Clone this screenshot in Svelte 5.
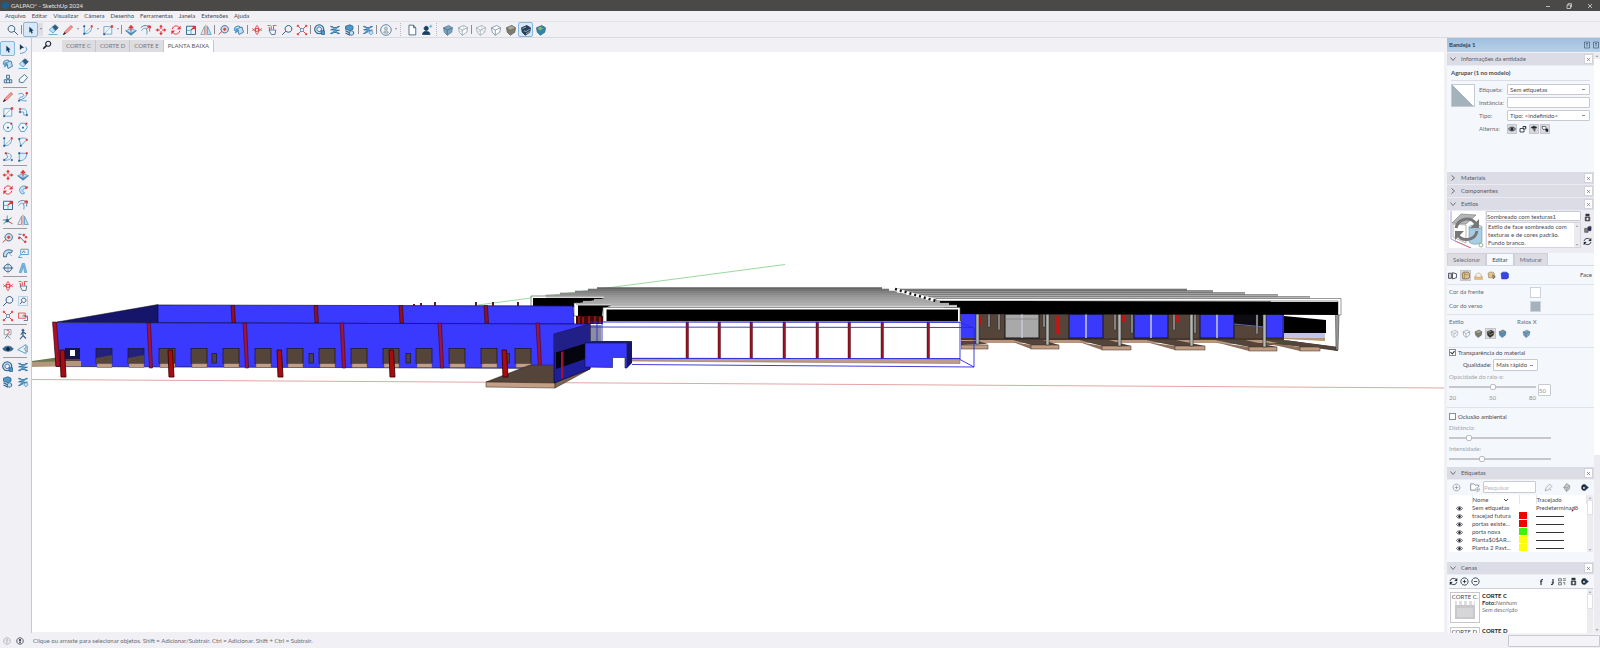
<script lang="ts">
  type Shape = [d: string, stroke: string, fill?: string, width?: number];

  const N = "#2f5d85";
  const B = "#4b98c9";
  const L = "#bfdff3";
  const R = "#de3434";
  const K = "#1c2430";
  const G = "#8a9099";
  const O = "none";

  const cube = "M2 5 L9 2 L14 5 L13 11 L7 15 L3 11 Z";
  const cubeEdges = "M2 5 L7 8 L14 5 M7 8 V15";

  const icons: Record<string, Shape[]> = {
    lens: [["M6 2 a4.500 4.500 0 1 1 -.1 0 Z M9.500 9.500 L14.500 14.500", N, O, 1.3]],
    search: [["M10 2 a4.5 4.5 0 1 1 -.1 0 Z M6.500 9.500 L1.500 14.500", N, O, 1.3]],
    find: [["M10 2 a4 4 0 1 1 -.1 0 Z", K, O, 1.8], ["M7 9 L2 14", K, O, 2.6]],
    select: [["M6 4 L11 8.500 L9 9 L10 12 L8.800 12.500 L7.500 9.800 L6 11 Z", "#143a5e", "#143a5e", 0.4]],
    lasso: [["M4 2 L9 6 L6.500 6.500 L4 9 Z", "#143a5e", "#143a5e", 0.4], ["M11 5 C15 8 13 13 4 14", B, O, 1.2]],
    eraser: [["M7 4 L11 1 L15 5 L11 9 Z", N, N], ["M7 4 L11 9 L8 12 L3 8 Z", B, L], ["M2 14 H14", B]],
    pencil: [["M2 14 L4 10 L12 2 L14 4 L6 12 Z", R, "#f3a9a4"], ["M2 14 L3.500 11.500 L4.500 12.500 Z", K, K]],
    freehand: [["M2 4 C8 1 12 7 6 8 S4 14 13 13 M3 12 C8 11 12 9 13 4", B, O, 1.2], ["M12 2 h2 v2 h-2 Z", R, R], ["M2 12 h1.500 v1.500 h-1.500 Z", N, N]],
    arc: [["M3 3 V13 C9 13 13 10 13 3", B, O, 1.1], ["M3 13 L13 3", G, O, 0.7], ["M2 2 h2 v2 h-2 Z M2 12 h2 v2 h-2 Z", N, N, 0.5], ["M12 2 h2 v2 h-2 Z", R, R, 0.5]],
    arc2: [["M3 4 C9 1 14 4 13 5 L5 13 Z", B, O, 1.1], ["M2 3 h2 v2 h-2 Z M4 12 h2 v2 h-2 Z", N, N, 0.5], ["M12 4 h2 v2 h-2 Z", R, R, 0.5]],
    arc3: [["M5 3 C16 2 14 14 3 12 M5 3 L8 8 L3 12", B, O, 1.1], ["M4 2 h2 v2 h-2 Z", R, R, 0.5], ["M2 11 h2 v2 h-2 Z M12 11 h2 v2 h-2 Z", N, N, 0.5]],
    pie: [["M3 3 V13 C9 13 13 10 13 3 Z", B, "#dceef9", 1.1], ["M2 2 h2 v2 h-2 Z M2 12 h2 v2 h-2 Z", N, N, 0.5], ["M12 2 h2 v2 h-2 Z", R, R, 0.5]],
    rect: [["M2.500 3.500 H13 V13.500 H2.500 Z", B, "#eef7fc"], ["M3 13 L13 3", G, O, 0.8], ["M12 2 h2.500 v2.500 h-2.500 Z", R, R, 0.5], ["M2 12.500 h2 v2 h-2 Z", N, N, 0.5]],
    rotrect: [["M4 4 H10 C13 5 13 8 13 12 H9 V8 H4 Z", B, "#eef7fc"], ["M3 3 h2 v2 h-2 Z", R, R, 0.5], ["M12 11 h2 v2 h-2 Z M3 7 h2 v2 h-2 Z", N, N, 0.5]],
    circle: [["M8 2 a6 6 0 1 1 -.1 0 Z", B, "#f2f9fd", 1.2], ["M7.200 8 h1.500 v1.500 h-1.500 Z", N, N], ["M11.500 2.500 h2 v2 h-2 Z", R, R, 0.5]],
    polygon: [["M5 3 H10 L14 8 L10 14 H5 L2 8 Z", B, "#f2f9fd", 1.2], ["M7.200 8 h1.500 v1.500 h-1.500 Z", N, N], ["M11.500 2.500 h2 v2 h-2 Z", R, R, 0.5]],
    pushpull: [["M1 9 L8 12 L15 9 L8 15 Z", N, B, 0.8], ["M1 9 L8 6 L15 9 L8 12 Z", B, L], ["M8 10 V5 M8 2 L5.500 5 H10.500 Z", R, R, 1.4]],
    offset: [["M2 9 C6 3 11 5 9 14", B, O, 1.2], ["M1 5 C6 0 13 1 13 10", N, O, 1], ["M8 7 L13 3 M10 2.500 H14 V6", R, R, 1.1]],
    move: [["M8 1 L10 4 H6 Z M8 15 L10 12 H6 Z M1 8 L4 6 V10 Z M15 8 L12 6 V10 Z", R, R, 0.4], ["M8 4 V6.500 M8 9.500 V12 M4 8 H6.500 M9.500 8 H12", R, O, 1.5]],
    rotate: [["M3 7 C4 2 10 1 12.500 5 M13 9 C12 14 6 15 3.500 11", R, O, 1.3], ["M14 2.500 V7 H9.500 Z M2 13.500 V9 H6.500 Z", R, R, 0.3]],
    follow: [["M12 3 C5 1 1 7 5 12 C8 15 12 12 9 11 C6 9 8 6 12 6", B, L, 1.1], ["M11 3 L15 4 L12 7 Z", R, R, 0.5]],
    scale: [["M2 3 H14 V14 H2 Z", N, "#e6f3fa", 1.2], ["M2.500 8.500 H8 V14", B], ["M8 8 L13 4 M10 3.500 H13.500 V7", R, R, 1.8]],
    axes: [["M7 9 V2", B, O, 1.3], ["M7 9 L14 13", R, O, 1.3], ["M7 9 L2 13 M7 9 L13 5", "#2b9c59", O, 1.3], ["M5.500 7.500 h3 v3 h-3 Z", N, N], ["M1 8 H6", N]],
    mirror: [["M6 3 V14 H1 Z", G, "#e4e8ee"], ["M10 3 V14 H15 Z", B, L], ["M8 1 V15", R, O, 0.9]],
    tape: [["M9 2 a5 5 0 1 1 -.1 0 Z", N, "#cfdbe6", 1.1], ["M9 5.500 a1.500 1.500 0 1 1 -.1 0 Z", R, R], ["M5 10 L1 14", R, O, 1.3]],
    paint: [["M6 6 L12 4 L14 11 L8 14 Z", N, L], ["M2 9 C1 3 8 1 10 5", B, O, 1.6], ["M4 6 L8 9 L3 12 Z", B, B]],
    stamp: [["M6 3 H10 V7 H6 Z M3 9 H13 V13 H3 Z M8 7 V9", N, "#dfe9f1", 1.1], ["M6 9 V13 M10 9 V13", N]],
    tag: [["M3 12 L3 8 L10 2 L14 6 L8 13 Z", N, "#f2f7fb", 1.1]],
    dims: [["M3 6 L10 13 M2 3 L6 3", N, O, 1.1], ["M2 7 h2 v2 h-2 Z M8 3 h2 v2 h-2 Z M11 6 h2 v2 h-2 Z M10 12 h2 v2 h-2 Z", R, R]],
    protractor: [["M2 13 C1 4 8 2 14 5 L12 8 C8 6 6 9 6 13 Z", N, L, 1.2], ["M9 8 L13 12", B]],
    label: [["M5 3 H15 V10 H5 Z M5 10 L2 14 H7", B, "#eef7fc", 1.2], ["M7 8 L9 5 L11 8", N]],
    section: [["M8 3 a5 5 0 1 1 -.1 0 Z M1 8 H15", N, "#dce9f2", 1.2], ["M8 1 V15", G]],
    text3d: [["M3 14 L7 2 H10 L13 14 H10 L8.500 5 L6 14 Z", B, "#7fbbe0", 0.9]],
    orbit: [["M8 2 C5 5 5 11 8 14 M8 2 C11 5 11 11 8 14", R, O, 1.2], ["M2 6 C6 11 10 11 14 6 M2 9 C5 5 11 5 14 9", R, O, 1.2]],
    pan: [["M5 8 L4 4 M7 7 V3 M10 7 V3", R, O, 1.2], ["M4 8 H13 L12 14 H7 Z", N, "#f4f4f6"], ["M2 2 H6 M9 2 H14", R]],
    zoomwin: [["M2 2 H14 V14 H2 Z", "#9cc8e2"], ["M9 4 a3 3 0 1 1 -.1 0 Z M7 9 L4 12", N, O, 1.2]],
    zoomext: [["M6 6 L2 2 M10 6 L14 2 M6 10 L2 14 M10 10 L14 14", R, O, 1.2], ["M1.500 1.500 h2.500 l-2.500 2.500 Z M14.500 1.500 h-2.500 l2.500 2.500 Z M1.500 14.500 h2.500 l-2.500 -2.500 Z M14.500 14.500 h-2.500 l2.500 -2.500 Z", R, R, 0.5], ["M6 6 H10 V10 H6 Z", N, "#eef", 0.8]],
    previous: [["M2 4 H11 V11 H2 Z", R, "#fbeaea", 1], ["M7 8 H14 V14 H9", N], ["M9 6 L13 10", R, O, 1.3]],
    position: [["M3 2 H12 V9 H3 Z", G, "#f1f1f4"], ["M6 4 a2 2 0 1 1 2 3 L7 9", R, O, 1.1], ["M4 14 L7 10 L11 14", N]],
    walk: [["M8 1.500 a1.500 1.500 0 1 1 -.1 0 Z", N, N, 0.8], ["M8 5 V10 L4 15 M8 10 L12 14 M5 9 L8 5 L12 8", N, O, 1.5]],
    look: [["M1 8 C4 3 12 3 15 8 C12 12 4 12 1 8 Z", N, "#2a6c94"], ["M8 6 a2 2 0 1 1 -.1 0 Z", K, K]],
    cutplane: [["M1 9 L12 2 V14 Z", B, "#eef7fc", 1.2], ["M9 8 L14 4 V12 Z", G, O]],
    warehouse: [["M7 1 a6 6 0 1 1 -.1 0 Z", N, L, 1.4], ["M7 4 a3 3 0 1 1 -.1 0 Z", N, "#eef", 1.1], ["M9 9 H14 V14 H10 Z", N, B]],
    extension: [["M2 3 C6 6 10 6 14 3 M2 8 C6 6 10 10 14 8 M2 13 C6 10 10 10 14 13", N, O, 1.7], ["M4 3 L12 13 M12 3 L4 13", B, O, 1.7]],
    layout: [["M2 3 L8 1 L12 3 V7 L8 9 L2 7 Z", N, B], ["M2 9 L8 12 L12 10 M2 12 L8 15", N, O, 1.5], ["M10 9 a3 3 0 1 1 -.1 0", N, L, 1.2]],
    extcfg: [["M2 3 C6 6 10 6 14 3 M2 8 C6 6 10 10 14 8 M2 13 L8 10", N, O, 1.7], ["M4 3 L12 13 M12 3 L4 12", B, O, 1.7], ["M12 9 a2.500 2.500 0 1 1 -.1 0 Z", B, L]],
    user: [["M8 1 a7 7 0 1 1 -.1 0 Z", N, "#f0f3f6", 1], ["M8 4 a2 2 0 1 1 -.1 0 Z M5 12 C5 8 11 8 11 12 Z", G, "#c9d2da", 1]],
    page: [["M4 1.500 H10 L13 5 V14.500 H4 Z M10 1.500 V5 H13", N, "#fff", 1.1]],
    person: [["M7 3 a2.800 2.800 0 1 1 -.1 0 Z M2 14 C2 8 12 8 12 14 Z", "#173f66", "#173f66"], ["M13 1 V5 M11 3 H15", B]],
    xray: [[cube, "#557d99", "#7fa3bd"], [cubeEdges, "#3f6582"]],
    backedge: [[cube, "#8298a8", "#fff"], [cubeEdges, "#8298a8"], ["M3 11 L9 8 V2", "#b5c2cc", O, 0.8]],
    wire: [[cube, "#8d9aa5", "#fafbfc", 0.9], [cubeEdges, "#8d9aa5", O, 0.9], ["M3 11 L9 8 L13 11 M9 8 V2", "#a9b3bb", O, 0.7]],
    hidden: [[cube, "#68839a", "#fff"], [cubeEdges, "#68839a"]],
    shaded: [[cube, "#5d6258", "#7c7d70"], ["M2 5 L9 2 L14 5 L7 8 Z", "#5d6258", "#aaa99a", 0.6]],
    textured: [[cube, "#1d2c3a", "#24435e"], ["M3 6 L8 4 M5 9 L8 10 L13 7 M8 13 L13 10", "#bfd5e4", O, 0.9]],
    texdark: [[cube, "#2b2a26", "#35332d"], ["M3 6 L9 4 M5 8 L8 10 L13 7", "#b9b29c", O, 1.2]],
    mono: [[cube, "#2c6687", "#2f86ad"], ["M7 4 L10 6 L7 8 L4 6 Z", "#8fb56f", "#8fb56f"]],
    monoblue: [[cube, "#3e6d92", "#4d8fc0"], ["M2 5 L9 2 L14 5 L7 8 Z", "#3e6d92", "#8b8f88", 0.6]],
    eye: [["M1 8 C4 3 12 3 15 8 C12 13 4 13 1 8 Z", K, O, 1.6], ["M8 5.500 a2.500 2.500 0 1 1 -.1 0 Z", K, K, 1.4]],
    unlock: [["M2 7 H10 V14 H2 Z M8 7 V3 H13 V7", K, O, 1.6], ["M8 3 H14 V8 H8", K, O, 1.2]],
    shadowcast: [["M2 5 L8 2 L14 5 L8 8 Z", K, K], ["M6 8 L12 7 L9 14 Z", G, "#555"]],
    shadowrecv: [["M2 3 H9 L11 8 L4 9 Z", K, "#fff", 1.2], ["M9 8 H14 V13 H10 Z", K, K]],
    stylenew: [["M4 7 H12 V14 H4 Z", K, "#555"], ["M5 2 H11 V5 H5 Z", K, K], ["M7 9 H9 V12 H7 Z", "#fff", "#fff"]],
    styleadd: [["M3 6 H9 V13 H3 Z M8 4 L14 2 V8 H9", "#333", "#858585"], ["M9 4 H14 V10 H10 Z", "#223", "#2b2f78"]],
    refresh: [["M2 7 C3 2 10 1 13 5 M14 9 C13 14 6 15 3 11", K, O, 1.6], ["M14.500 2 V7 H10 Z M1.500 14 V9 H6 Z", K, K, 0.4]],
    edgeset: [["M1 4 H6 V13 H1 Z", K, "#ddd", 1.3], ["M8 3 L15 5 V12 L8 14 Z", K, "#fff", 1.3]],
    faceset: [["M2 4 L5 2 H13 L15 5 V12 L12 14 H3 Z", "#6f5a35", "#dcbf8a", 1.2], ["M5 2 L6 6 V14 M6 6 H12", "#8d7344"]],
    bgset: [["M1 10 H15 V15 H1 Z", "#d9a15c", "#f0bf7e"], ["M3 9 C3 2 13 2 13 9 V11 H3 Z", "#98927f", "#f7f4ea"]],
    markset: [["M2 4 L5 2 H11 L13 5 V12 H3 Z", "#8d7344", "#e2c48c"], ["M10 7 L15 10 L11 14 Z", "#555", "#999"]],
    modelset: [["M2 4 L5 2 H12 L15 5 V12 L12 14 H3 Z", "#2431b0", "#3644e8"]],
    add: [["M8 1.500 a6.500 6.500 0 1 1 -.1 0 Z M8 5 V11 M5 8 H11", K, O, 1.4]],
    addgrey: [["M8 2 a6 6 0 1 1 -.1 0 Z M8 5 V11 M5 8 H11", G, O, 1.3]],
    remove: [["M8 1.500 a6.500 6.500 0 1 1 -.1 0 Z M5 8 H11", K, O, 1.4]],
    folder: [["M1 13 V3 H6 L8 5 H14 V8 M1 13 H8", "#7b8088", "#fff", 1.3], ["M12 9 a3 3 0 1 1 -.1 0 Z M12 10.500 V13.500 M10.500 12 H13.500", "#7b8088", "#fff"]],
    pen: [["M2 14 L4 8 L10 2 L14 6 L8 12 Z M10 12 H13", "#8e9298", "#f4f4f4", 1.2]],
    filter: [["M3 8 L8 1 L14 5 L13 11 L8 15 Z", "#777", "#c9c9c9"], ["M3 8 L9 8 L14 5 M9 8 L8 15", "#8c8c8c"]],
    export: [["M5 3 H9 V13 H5 L3 10 V6 Z", K, K], ["M9 3 L15 8 L9 13 Z", "#173a5c", "#173a5c"], ["M6 7 H8 V10 H6 Z", "#fff", "#fff", 0.5]],
    up: [["M6 14 V5 C6 3 8 3 10 3", K, O, 2.2], ["M4 7 H9", K]],
    down: [["M10 2 V11 C10 13 8 13 6 13", K, O, 2.2], ["M7 9 H12", K]],
    grid: [["M1 3 H6 V7 H1 Z M9 3 H14 M9 6 H14 M1 10 H6 V14 H1 Z M9 10 H12 V14", "#444", O, 1.2]],
    info: [["M8 1.500 a6.500 6.500 0 1 1 -.1 0 Z M8 5 V12 M6 7 L8 5 L10 7", G, O, 1.2]],
    geo: [["M8 1.500 a6.500 6.500 0 1 1 -.1 0 Z", K, O, 1.4], ["M8 4.500 a1.500 1.500 0 1 1 -.1 0 Z M7.500 9 H8.500 V12 H7.500 Z", K, K]],
    cross: [["M3 3 L13 13 M13 3 L3 13", "#66666c", O, 2]],
    pin: [["M3 2 H13 V14 H3 Z M6 5 H10 M8 5 V11", "#4f6780", O, 1.6]],
  };

  const menus = ["Arquivo", "Editar", "Visualizar", "Câmera", "Desenho", "Ferramentas", "Janela", "Extensões", "Ajuda"];

  // "|" is a divider, "v" a dropdown caret, ":" the gap between two toolbars
  const toolbar = [
    "lens", "|", "select", "v", " ", "eraser", "pencil", "v", "arc", "v", "rect", "v", "|",
    "pushpull", "offset", "move", "rotate", "scale", "mirror", "|", "tape", "paint", "|",
    "orbit", "pan", "search", "zoomext", "|", "warehouse", "extension", "layout", "|", "extcfg", "|",
    "user", "v", ":", "page", "person", ":", "xray", "backedge", "|", "wire", "hidden", "shaded", "textured", "mono",
  ];

  const palette = [
    ["select", "lasso", "paint", "eraser", "stamp", "tag"],
    ["pencil", "freehand", "rect", "rotrect", "circle", "polygon", "arc", "arc2", "arc3", "pie"],
    ["move", "pushpull", "rotate", "follow", "scale", "offset", "axes", "mirror"],
    ["tape", "dims", "protractor", "label", "section", "text3d"],
    ["orbit", "pan", "search", "zoomwin", "zoomext", "previous"],
    ["position", "walk", "look", "cutplane"],
    ["warehouse", "extension", "layout", "extcfg"],
  ];

  const sceneTabs = ["CORTE C", "CORTE D", "CORTE E", "PLANTA BAIXA"];
  let activeScene = $state("PLANTA BAIXA");

  const tags = [
    { name: "tracejad futura", color: "#f40000" },
    { name: "portas existe...", color: "#f40000" },
    { name: "porta nova", color: "#3cf500" },
    { name: "Planta$0$AR...", color: "#ffff00" },
    { name: "Planta 2 Pavt...", color: "#ffff00" },
  ];

  const scenes = [
    { name: "CORTE C", expanded: true },
    { name: "CORTE D", expanded: false },
  ];

  let transparency = $state(true);
  let occlusion = $state(false);

  // left building
  const backColumns = [231, 314, 399, 484];
  const wallColumns = [147, 243, 340, 438, 536];
  const frontColumns = [60, 168, 277, 389, 502];
  const docks = [96, 128, 159, 191, 223, 255, 287, 319, 351, 383, 416, 449, 481, 515];
  const hatches = [212, 309, 406, 505];
  const studs = [[413, 304], [420, 303], [434, 302], [475, 302], [492, 302], [517, 302]];

  // central roof: one strip per roof bay, seen edge on
  const strips = [
    [597, 882, 287.5, "#6a6a6a"], [588, 889, 289, "#7c7c7c"], [575, 897, 291, "#8e8e8e"],
    [560, 906, 293, "#9d9d9d"], [546, 915, 295, "#ababab"], [604, 924, 297, "#b4b4b4"],
    [594, 932, 299, "#bcbcbc"], [583, 940, 301, "#c4c4c4"], [576, 949, 303, "#cccccc"],
    [611, 957, 305, "#d6d6d6"],
  ] as [number, number, number, string][];
  const hallColumns = [686, 718, 750, 783, 816, 848, 881, 927];

  // right building
  const rightStrips = [
    [893, 1187, 289, "#808080"], [900, 1213, 290.5, "#929292"], [908, 1245, 292.5, "#a0a0a0"],
    [918, 1278, 294.5, "#ababab"], [928, 1310, 296.5, "#b8b8b8"],
  ] as [number, number, number, string][];
  const doors = [[1005, "#a9a9a9"], [1069, "#3a3aff"], [1134, "#3a3aff"], [1200, "#3a3aff"]] as [number, string][];
  const posts = [[976, 344], [1046, 345], [1118, 346], [1190, 346], [1263, 347]];
  const rearPosts = [[988, 327], [998, 330], [1043, 327], [1114, 330], [1131, 333], [1173, 330], [1194, 333], [1256, 334]];
  const ramps = [[1013, 1031, 1059, 345], [1079, 1102, 1131, 346], [1146, 1175, 1205, 346], [1215, 1249, 1277, 347], [1262, 1300, 1320, 347]];
</script>

{#snippet icon(name: string, size = 12)}
  <svg class="icon" width={size} height={size} viewBox="0 0 16 16" aria-hidden="true">
    {#each icons[name] as [d, stroke, fill, width]}
      <path {d} {stroke} fill={fill ?? "none"} stroke-width={width ?? 1} />
    {/each}
  </svg>
{/snippet}

{#snippet header(title: string, open: boolean)}
  <header class="section-head">
    <svg width="6" height="6" viewBox="0 0 6 6" aria-hidden="true">
      <path d={open ? "M0.500 1.500 L3 4.500 L5.500 1.500" : "M1.500 0.500 L4.500 3 L1.500 5.500"} fill="none" stroke="#555" stroke-width=".8" />
    </svg>
    <h2>{title}</h2>
    <button class="close" aria-label="Fechar {title}">{@render icon("cross", 5)}</button>
  </header>
{/snippet}

<div class="app">
  <div class="titlebar">
    <svg width="7" height="7" viewBox="0 0 8 8" aria-hidden="true"><path d="M0 2 L4 0 L8 2 V6 L4 8 L0 6 Z" fill="#1b5f8c" /></svg>
    <span>GALPAO* - SketchUp 2024</span>
    <div class="window-buttons">
      <button aria-label="Minimizar"><svg width="6" height="6" viewBox="0 0 6 6"><path d="M1 3.500 H5" /></svg></button>
      <button aria-label="Restaurar"><svg width="6" height="6" viewBox="0 0 6 6"><path d="M1 2 H4.500 V5.500 H1 Z M2 2 V.7 H5.500 V4 H4.500" /></svg></button>
      <button aria-label="Fechar"><svg width="6" height="6" viewBox="0 0 6 6"><path d="M1 1 L5 5 M5 1 L1 5" /></svg></button>
    </div>
  </div>

  <nav class="menubar">
    {#each menus as menu}
      <button>{menu}</button>
    {/each}
  </nav>

  <div class="toolbar">
    {#each toolbar as item, i}
      {#if item === "|"}
        <span class="divider"></span>
      {:else if item === "v"}
        <button class="caret" class:attached={i === 3} aria-label="Mais opções"></button>
      {:else if item === " "}
        <span class="space"></span>
      {:else if item === ":"}
        <span class="grip"></span>
      {:else}
        <button class="tool" class:active={item === "select" || item === "textured"} aria-label={item}>
          {@render icon(item)}
        </button>
      {/if}
    {/each}
  </div>

  <div class="workspace">
    <div class="palette">
      {#each palette as group, g}
        <div class="group">
          {#each group as item}
            <button class="tool" class:active={g === 0 && item === "select"} aria-label={item}>{@render icon(item)}</button>
          {/each}
        </div>
      {/each}
    </div>

    <main>
      <div class="scene-tabs">
        <button class="find" aria-label="Pesquisar cenas">{@render icon("find", 10)}</button>
        {#each sceneTabs as tab}
          <button class="scene-tab" class:current={tab === activeScene} onclick={() => (activeScene = tab)}>{tab}</button>
        {/each}
      </div>

      <svg class="viewport" viewBox="32 52 1412 580" role="img" aria-label="Modelo do galpão">
        <line x1="32" y1="379.500" x2="1444" y2="388" stroke="#dc8e8e" stroke-width=".8" />
        <line x1="478" y1="305" x2="785" y2="264.500" stroke="#7fce86" stroke-width=".8" />

        <!-- right building -->
        <polygon points="960,314 1285,314 1285,340 1338,347 1338,351 1300,346 1215,343 960,343" fill="#54443a" />
        <polygon points="960,340 1285,340 1285,343 960,343" fill="#b8957c" />
        <polygon points="960,338 1285,338 1285,340 960,340" fill="#46372e" />
        {#each ramps as [x0, x1, x2, y]}
          <polygon points="{x0},340 {x0 + 30},340 {x2},{y} {x1},{y}" fill="#54443a" />
          <polygon points="{x1},{y} {x2},{y} {x2},{y + 4} {x1},{y + 4} {x0},342" fill="#8e705e" />
          <rect x={x1} {y} width={x2 - x1} height="4" fill="#bf9b82" stroke="#3a2d25" stroke-width=".5" />
        {/each}
        <polygon points="961,341 978,341 988,344 961,345" fill="#54443a" />
        <rect x="961" y="345" width="27" height="4" fill="#bf9b82" stroke="#3a2d25" stroke-width=".5" />
        <rect x="961" y="314" width="14" height="24" fill="#3a3aff" />
        {#each doors as [x, fill]}
          <rect {x} y="314" width="34" height="24" {fill} stroke="#15151c" />
          <line x1={x + 17} y1="314" x2={x + 17} y2="338" stroke="#c9c9d6" stroke-width="1.500" />
        {/each}
        <line x1="1005" y1="319" x2="1039" y2="319" stroke="#777" stroke-width=".6" />
        <polygon points="1234,314 1264,314 1264,327 1234,325" fill="#0d0c12" />
        <path d="M1234 324 L1264 327" stroke="#6c6ca8" />
        <rect x="1266" y="314" width="17" height="24" fill="#3a3aff" stroke="#15151c" stroke-width=".6" />
        <polygon points="1284,314 1338,314 1338,347 1326,345 1284,340" fill="#fff" />
        <polygon points="1284,316 1326,320 1326,333 1284,333" fill="#000" />
        <rect x="1284" y="333" width="41" height="5" fill="#c3c3ea" />
        <polygon points="1284,338 1325,338 1325,341 1284,339" fill="#b8957c" />
        <polygon points="1284,340 1338,347 1338,351 1300,344" fill="#54443a" />
        {#each rearPosts as [x, y]}
          <rect {x} y="314" width="2" height={y - 314} fill="#9b9b9b" stroke="#222" stroke-width=".4" />
        {/each}
        <path d="M980 316 V325 M1058 316 V334 M1124 315 V322 M1177 315 V322" stroke="#c41414" stroke-width="3.500" />
        {#each posts as [x, y]}
          <rect {x} y="314" width="3" height={y - 314} fill="#b4b8b4" stroke="#222" stroke-width=".5" />
        {/each}
        <path d="M1335.500 314 H1339 L1338 350 H1336 Z" fill="#9a9a9a" stroke="#222" stroke-width=".5" />
        {#each rightStrips as [x0, x1, y, fill]}
          <rect x={x0} {y} width={x1 - x0} height="3" {fill} />
          <line {x1} y1={y} x2={x0} y2={y} stroke="#555" stroke-width=".5" />
        {/each}
        <polygon points="936,298.500 1341,298.500 1341,315 1338,315 1338,301 936,301" fill="#fff" stroke="#555" stroke-width=".6" />
        <polygon points="938,301 1338,301.500 1338,315 950,314" fill="#000" />

        <!-- central roof -->
        <polygon points="531,296 611,296 611,304 574,304 574,307 531,307" fill="#fff" stroke="#444" stroke-width=".6" />
        <polygon points="533,298 606,298 596,300 574,304 574,307 533,307" fill="#000" />
        <polygon points="574,303 612,303 604,316 574,316" fill="#fff" stroke="#444" stroke-width=".6" />
        <polygon points="578,305 612,305 603,309 602,316 578,316" fill="#000" />
        {#each strips as [x0, x1, y, fill]}
          <rect x={x0} {y} width={x1 - x0} height="2.500" {fill} />
          <line x1={x0} y1={y} x2={x1} y2={y} stroke="#5a5a5a" stroke-width=".5" />
        {/each}
        <path d="M893 289 L934 300" stroke="#fff" stroke-width="3" />
        <path d="M895 289 L936 301" stroke="#111" stroke-width="2.500" stroke-dasharray="2 3" />
        <rect x="603" y="307.500" width="357" height="14" fill="#fff" stroke="#555" stroke-width=".6" />
        <polygon points="606.500,309.500 958,309.500 958,322 606.500,321" fill="#000" />
        <rect x="603" y="321.500" width="358" height="37" fill="#fff" />
        <polygon points="630,358 960,359 960,363.500 630,361" fill="#bf9b8c" stroke="#7a5c4c" stroke-width=".5" />
        {#each hallColumns as x}
          <rect {x} y="322" width="2.500" height="36.500" fill="#9c1020" stroke="#330808" stroke-width=".4" />
        {/each}
        <rect x="576" y="316" width="27" height="8" fill="#3a0c0c" />
        <path d="M579 316 V324 M583 317 V324 M589 316 V324 M595 316 V324 M600 317 V324" stroke="#b01818" stroke-width="1.500" />
        <rect x="589" y="325" width="12" height="17" fill="#8c8ca4" />
        <path d="M590 322 L960 322.500 L974 328 V367 L960 359.500 V322.500 M588 327 L974 327.500 M632 358.500 H960 M632 364.500 L974 367 M597 322 V342 M602 322 V341" fill="none" stroke="#2a2ad4" stroke-width=".9" />

        <!-- left building -->
        <polygon points="32,361 60,357 84,360 84,363 32,363" fill="#6b7a4c" />
        <polygon points="32,362 84,361 84,366 32,367" fill="#b3967c" />
        <polygon points="57,322 158,304.500 158,323" fill="#15156c" stroke="#111" stroke-width=".5" />
        <polygon points="158,305 573,306 574,324 158,323" fill="#3a3aff" stroke="#10103c" stroke-width=".7" />
        {#each studs as [x, y]}
          <rect {x} {y} width="2" height={306 - y} fill="#5a1a24" />
        {/each}
        {#each backColumns as x}
          <polygon points="{x},305.500 {x + 3.5},305.500 {x + 4.5},323 {x + 1},323" fill="#8e1024" stroke="#2b0810" stroke-width=".6" />
        {/each}
        <polygon points="54,322.500 590,324 590,368.500 56,366.500" fill="#3a3aff" stroke="#10103c" stroke-width=".7" />
        {#each docks as x, i}
          <rect {x} y="348.500" width="16" height="15" fill={i < 2 ? "#22227e" : "#54443a"} stroke="#1b1620" stroke-width=".7" />
          {#if i < 2}
            <polygon points="{x},358 {x + 16},355 {x + 16},363.500 {x},363.500" fill="#54443a" />
          {/if}
          <rect x={x + 1} y="363.500" width="15" height="4" fill="#c39f85" stroke="#54443a" stroke-width=".4" />
        {/each}
        <rect x="65" y="348" width="15" height="13" fill="#15154c" />
        <rect x="70" y="350" width="5" height="6" fill="#fff" />
        <rect x="65" y="361" width="16" height="5.500" fill="#b3967c" />
        <rect x="65" y="359" width="15" height="2" fill="#54443a" />
        {#each hatches as x}
          <rect {x} y="353.500" width="4.500" height="9.500" fill="#4c4048" stroke="#1b1620" stroke-width=".7" />
        {/each}
        <polygon points="52.500,322 56.500,322 60,366.500 56,366.500" fill="#a81024" stroke="#3c0810" stroke-width=".6" />
        {#each wallColumns as x}
          <polygon points="{x},323 {x + 3.5},323 {x + 5.5},368 {x + 2.500},368" fill="#a01440" stroke="#3c0820" stroke-width=".6" />
        {/each}
        <polygon points="486,382 530,365 590,365 555,384" fill="#54443a" stroke="#2c211b" stroke-width=".5" />
        <polygon points="486,382 555,383 555,388 486,387" fill="#c39f85" stroke="#2c211b" stroke-width=".5" />
        <polygon points="555,383 590,366 590,369 555,388" fill="#7d6352" stroke="#2c211b" stroke-width=".5" />
        {#each frontColumns as x}
          <polygon points="{x},350 {x + 4.5},350 {x + 6},377 {x + 1},377" fill="#a80c10" stroke="#3c0404" stroke-width=".9" />
        {/each}
        <polygon points="554,334 590,324 590,369 554,383" fill="#1e1e96" stroke="#0a0a30" stroke-width=".7" />
        <polygon points="556,352 585,343 585,359 556,369" fill="#050510" />
        <polygon points="554,334 590,324 590,342 554,353" fill="#202088" />
        <polygon points="561,352 563.500,351 563.500,378 561,379" fill="#a01030" />
        <polygon points="585,343 592,341 632,341 627,344" fill="#1c1c88" />
        <path d="M585 343 H627 V368 H625 V357.500 H612.500 V367.500 L585 367 Z" fill="#3a3aff" stroke="#10103c" stroke-width=".6" />
        <polygon points="627,343 632,341 632,363 627,368" fill="#15156c" />
      </svg>
    </main>

    <aside class="tray">
      <div class="tray-title">
        <strong>Bandeja 1</strong>
        <button aria-label="Fixar bandeja">{@render icon("pin", 8)}</button>
        <button aria-label="Fechar bandeja">{@render icon("pin", 8)}</button>
      </div>
      <div class="tray-body">
        <div class="sections">
          {@render header("Informações da entidade", true)}
          <section class="entity">
            <h3>Agrupar (1 no modelo)</h3>
            <div class="entity-body">
              <div class="swatch-large"></div>
              <div class="fields">
                <label for="tag">Etiqueta:</label>
                <select id="tag"><option>Sem etiquetas</option></select>
                <label for="instance">Instância:</label>
                <input id="instance" type="text" />
                <label for="kind">Tipo:</label>
                <select id="kind"><option>Tipo: &lt;indefinido&gt;</option></select>
                <span>Alterna:</span>
                <div class="toggles">
                  <button class="on" aria-label="Visível">{@render icon("eye", 8)}</button>
                  <button aria-label="Bloquear">{@render icon("unlock", 8)}</button>
                  <button class="on" aria-label="Projetar sombras">{@render icon("shadowcast", 8)}</button>
                  <button class="on" aria-label="Receber sombras">{@render icon("shadowrecv", 8)}</button>
                </div>
              </div>
            </div>
          </section>

          {@render header("Materiais", false)}
          {@render header("Componentes", false)}
          {@render header("Estilos", true)}
          <section class="styles">
            <div class="style-top">
              <svg class="style-thumb" width="36" height="37" viewBox="0 0 36 37" aria-hidden="true">
                <path d="M2 0 V28 M2 28 L22 37" stroke="#8a8ad8" stroke-width=".8" />
                <path d="M6 30 L22 37" stroke="#d86a6a" stroke-width=".8" />
                <path d="M3 12 L12 3 L27 4 L17 13 Z" fill="#b4b7ba" stroke="#777" stroke-width=".6" />
                <path d="M4 13 L17 14 V32 L4 26 Z" fill="#fff" stroke="#888" stroke-width=".6" />
                <path d="M20 16 H33 V31 C29 34 23 34 20 31 Z" fill="#a9cde2" stroke="#6b90a8" stroke-width=".6" />
                <ellipse cx="26.500" cy="16" rx="6.500" ry="2" fill="#c9e2f0" stroke="#6b90a8" stroke-width=".6" />
                <path d="M7 17 C9 7 22 5 27 13 M28 20 C26 30 13 31 9 24" fill="none" stroke="#777" stroke-width="3" />
                <path d="M30 8 V17 H21 Z M6 29 V20 H15 Z" fill="#777" />
                <circle cx="32" cy="34" r="2" fill="none" stroke="#8db58d" />
              </svg>
              <div class="style-text">
                <input type="text" aria-label="Nome do estilo" value="Sombreado com texturas1" />
                <div class="description">
                  <p>Estilo de face sombreado com texturas e de cores padrão. Fundo branco.</p>
                  <div class="scroll"><i>▴</i><i>▾</i></div>
                </div>
              </div>
              <div class="style-actions">
                <button aria-label="Criar estilo">{@render icon("stylenew", 9)}</button>
                <button aria-label="Painel secundário">{@render icon("styleadd", 9)}</button>
                <button aria-label="Atualizar estilo">{@render icon("refresh", 9)}</button>
              </div>
            </div>
            <div class="style-tabs">
              <button>Selecionar</button>
              <button class="current">Editar</button>
              <button>Misturar</button>
            </div>
            <div class="style-sets">
              {#each ["edgeset", "faceset", "bgset", "markset", "modelset"] as set}
                <button class:on={set === "faceset"} aria-label={set}>{@render icon(set, 9)}</button>
              {/each}
              <span>Face</span>
            </div>
            <div class="colors">
              <div><span>Cor da frente</span><button class="swatch" style:background="#fff" aria-label="Cor da frente"></button></div>
              <div><span>Cor do verso</span><button class="swatch" style:background="#a4b2bb" aria-label="Cor do verso"></button></div>
            </div>
            <div class="face-styles">
              <div>
                <span>Estilo</span>
                <div class="row">
                  {#each ["wire", "hidden", "shaded", "texdark", "monoblue"] as face}
                    <button class:on={face === "texdark"} aria-label={face}>{@render icon(face, 9)}</button>
                  {/each}
                </div>
              </div>
              <div class="rays">
                <span>Raios X</span>
                <div class="row"><button aria-label="Raios X">{@render icon("xray", 9)}</button></div>
              </div>
            </div>
            <div class="transparency">
              <label class="check"><input type="checkbox" bind:checked={transparency} />Transparência do material</label>
              <div class="quality">
                <label for="quality">Qualidade:</label>
                <select id="quality"><option>Mais rápido</option></select>
              </div>
              <label class="muted" for="xray-opacity">Opacidade do raio-x:</label>
              <div class="opacity">
                <div class="scale">
                  <input id="xray-opacity" type="range" min="20" max="80" value="50" />
                  <div class="ticks"><span>20</span><span>50</span><span>80</span></div>
                </div>
                <input class="amount" type="text" value="50" aria-label="Valor da opacidade" />
              </div>
            </div>
            <div class="occlusion">
              <label class="check"><input type="checkbox" bind:checked={occlusion} />Oclusão ambiental</label>
              <label class="muted" for="distance">Distância:</label>
              <input id="distance" type="range" value="18" />
              <label class="muted" for="intensity">Intensidade:</label>
              <input id="intensity" type="range" value="31" />
            </div>
          </section>

          {@render header("Etiquetas", true)}
          <section class="tags">
            <div class="tag-tools">
              <button aria-label="Adicionar etiqueta">{@render icon("addgrey", 9)}</button>
              <button aria-label="Adicionar pasta">{@render icon("folder", 10)}</button>
              <input type="text" placeholder="Pesquisar" aria-label="Pesquisar etiquetas" />
              <button aria-label="Marcar">{@render icon("pen", 9)}</button>
              <button aria-label="Filtrar">{@render icon("filter", 9)}</button>
              <button aria-label="Detalhes">{@render icon("export", 9)}</button>
            </div>
            <div class="tag-list">
              <table>
                <thead>
                  <tr><th class="eye"></th><th class="name">Nome <svg width="4" height="4" viewBox="0 0 4 4"><path d="M0 1 L2 3 L4 1" fill="none" stroke="#444" /></svg></th><th class="color"></th><th>Tracejado</th></tr>
                </thead>
                <tbody>
                  <tr><td class="eye">{@render icon("eye", 7)}</td><td>Sem etiquetas</td><td></td><td class="default">Predeterminado<span class="edit">{@render icon("pencil", 7)}</span></td></tr>
                  {#each tags as tag}
                    <tr>
                      <td class="eye">{@render icon("eye", 7)}</td>
                      <td>{tag.name}</td>
                      <td><span class="tag-color" style:background={tag.color}></span></td>
                      <td><span class="dash"></span></td>
                    </tr>
                  {/each}
                </tbody>
              </table>
              <div class="scroll"><i>▴</i><b></b><i>▾</i></div>
            </div>
          </section>

          {@render header("Cenas", true)}
          <section class="scenes">
            <div class="scene-tools">
              <button aria-label="Atualizar cenas">{@render icon("refresh", 9)}</button>
              <button aria-label="Adicionar cena">{@render icon("add", 9)}</button>
              <button aria-label="Remover cena">{@render icon("remove", 9)}</button>
              <span></span>
              <button aria-label="Mover para cima">{@render icon("up", 8)}</button>
              <button aria-label="Mover para baixo">{@render icon("down", 8)}</button>
              <button aria-label="Opções de exibição">{@render icon("grid", 9)}</button>
              <button aria-label="Mostrar detalhes">{@render icon("stylenew", 9)}</button>
              <button aria-label="Menu">{@render icon("export", 9)}</button>
            </div>
            <div class="scene-list">
              <ul>
                {#each scenes as scene}
                  <li>
                    <div class="scene-thumb" class:expanded={scene.expanded}>
                      <span>{scene.name}.</span>
                      {#if scene.expanded}
                        <svg width="20" height="18" viewBox="0 0 20 18" aria-hidden="true">
                          <path d="M0 4 H20 V18 H0 Z" fill="#c9c9cc" />
                          <path d="M0 0 H20 V4 H0 Z" fill="#dedee0" />
                          <path d="M3 0 V4 M8 0 V4 M13 0 V4 M18 0 V4" stroke="#fff" stroke-width="2" />
                          <path d="M2 7 H18 V16 H2 Z" fill="#d6d6d8" />
                        </svg>
                      {/if}
                    </div>
                    <div class="scene-info">
                      <strong>{scene.name}</strong>
                      {#if scene.expanded}
                        <p><b>Foto:</b><em>Nenhum</em></p>
                        <p><em>Sem descrição</em></p>
                      {/if}
                    </div>
                  </li>
                {/each}
              </ul>
              <div class="scroll"><i>▴</i><b></b></div>
            </div>
          </section>
        </div>
        <div class="tray-scroll"><i>▴</i><b></b><i>▾</i></div>
      </div>
    </aside>
  </div>

  <footer class="statusbar">
    {@render icon("info", 8)}
    {@render icon("geo", 8)}
    <p>Clique ou arraste para selecionar objetos. Shift = Adicionar/Subtrair. Ctrl = Adicionar. Shift + Ctrl = Subtrair.</p>
    <input type="text" aria-label="Medidas" />
  </footer>
</div>

<style>
  :global(body) {
    margin: 0;
    background: #f0f0f5;
  }
  .app {
    font-family: Lato, "Noto Sans", sans-serif;
    font-size: 6px;
    line-height: 8px;
    color: #4a4a50;
    background: #f0f0f5;
    overflow: hidden;
  }
  .app * {
    box-sizing: border-box;
  }
  button, input, select {
    font: inherit;
    color: inherit;
    margin: 0;
    padding: 0;
  }
  button {
    display: flex;
    align-items: center;
    justify-content: center;
    border: 0;
    background: none;
  }
  h2, h3, p, ul {
    margin: 0;
    padding: 0;
    font-size: inherit;
    font-weight: normal;
  }
  i {
    font-style: normal;
  }
  .icon {
    display: block;
    flex: none;
  }

  .titlebar {
    display: flex;
    align-items: center;
    gap: 2px;
    height: 11px;
    padding: 0 7px 0 2px;
    background: #4b4947;
    color: #e4e4e4;
  }
  .window-buttons {
    display: flex;
    gap: 15px;
    margin-left: auto;
  }
  .window-buttons path {
    fill: none;
    stroke: #d8d8d8;
    stroke-width: 0.8;
  }
  .menubar {
    display: flex;
    gap: 6px;
    height: 10px;
    padding-left: 5px;
  }
  .toolbar {
    display: flex;
    align-items: center;
    height: 17px;
    padding-left: 5px;
    border-top: 1px solid #e2e2e8;
    border-bottom: 1px solid #d9d9e0;
  }
  .tool {
    width: 15px;
    height: 15px;
    border: 1px solid transparent;
    border-radius: 2px;
  }
  .tool.active {
    border-color: #86b6da;
    background: #d8eafa;
  }
  .divider {
    width: 1px;
    height: 9px;
    margin: 0 1px;
    background: #8b8b90;
  }
  .caret {
    width: 5px;
    height: 13px;
  }
  .caret::after {
    content: "";
    border: 1px solid transparent;
    border-top: 2px solid #8b8b90;
  }
  .caret.attached {
    background: #dedee4;
  }
  .space {
    width: 2px;
  }
  .grip {
    width: 2px;
    height: 13px;
    margin: 0 2px;
    border-left: 1px dotted #b8b8c2;
  }

  .workspace {
    display: flex;
  }
  .palette {
    width: 31px;
    flex: none;
    padding-top: 3px;
  }
  .group {
    display: grid;
    grid-template-columns: 15px 15px;
  }
  .group + .group::before {
    content: "";
    grid-column: 1 / 3;
    height: 1px;
    margin: 1px 3px;
    background: #9b9ba2;
  }
  main {
    flex: 1;
    min-width: 0;
    border-left: 1px solid #c9c9d2;
  }
  .scene-tabs {
    display: flex;
    align-items: flex-end;
    height: 14px;
  }
  .find {
    width: 30px;
    height: 14px;
  }
  .scene-tab {
    height: 12px;
    padding: 0 4px;
    border-right: 1px solid #c6c6cc;
    background: #dcdce1;
    color: #77777c;
  }
  .scene-tab.current {
    background: #fff;
    color: #5c5c60;
  }
  .viewport {
    display: block;
    width: 100%;
    background: #fff;
  }

  .tray {
    width: 153px;
    flex: none;
    margin-left: 3px;
    display: flex;
    flex-direction: column;
  }
  .tray-title {
    display: flex;
    align-items: center;
    gap: 1px;
    height: 14px;
    padding: 0 0 0 2px;
    background: linear-gradient(#9fbfdf, #b8d0e8);
    color: #33404e;
  }
  .tray-title strong {
    flex: 1;
  }
  .tray-body {
    display: flex;
    flex: 1;
    padding-top: 1px;
  }
  .sections {
    flex: 1;
    min-width: 0;
    background: #f4f7fc;
  }
  .section-head {
    display: flex;
    align-items: center;
    gap: 5px;
    height: 13px;
    padding: 0 1px 0 3px;
    background: #dcdce6;
    border-bottom: 1px solid #ebebf2;
    color: #5a5a62;
  }
  .section-head h2 {
    flex: 1;
  }
  .close {
    width: 9px;
    height: 10px;
    border: 1px solid #d2d2da;
    background: #fff;
  }

  select, input[type="text"] {
    min-width: 0;
    border: 1px solid #c9c9d0;
    border-radius: 1px;
    background: #fff;
  }
  select {
    appearance: none;
    padding: 0 2px;
    background: linear-gradient(#8b8b90, #8b8b90) no-repeat right 4px center / 3px 1px #fff;
  }
  .entity {
    height: 106px;
    padding: 2px 4px 0;
  }
  .entity h3 {
    padding-bottom: 3px;
    line-height: 9px;
    border-bottom: 1px solid #dcdce4;
    font-weight: bold;
  }
  .entity-body {
    display: flex;
    gap: 4px;
    padding-top: 3px;
  }
  .swatch-large {
    width: 24px;
    height: 23px;
    border: 1px solid #c4ccd2;
    background: linear-gradient(45deg, #a4b2bb 50%, #fff 50%);
  }
  .fields {
    flex: 1;
    display: grid;
    grid-template-columns: 28px 1fr;
    row-gap: 2px;
    color: #6a6a72;
  }
  .fields select, .fields input {
    height: 11px;
    width: 100%;
    color: #4a4a50;
  }
  .fields > span, .fields > label {
    line-height: 11px;
  }
  .toggles {
    display: flex;
    gap: 1px;
    padding-top: 1px;
  }
  .toggles button {
    width: 10px;
    height: 10px;
    border-radius: 1px;
  }
  .on {
    background: #d9d9de;
    outline: 1px solid #c4c4ca;
    outline-offset: -1px;
  }

  .style-top {
    display: flex;
    gap: 1px;
    padding: 0 1px 5px 2px;
    background: #ececf2;
  }
  .style-thumb {
    background: #fff;
    flex: none;
  }
  .style-text {
    flex: 1;
    min-width: 0;
    color: #4a4a50;
  }
  .style-text input {
    display: block;
    width: 100%;
    height: 10px;
    margin-bottom: 1px;
  }
  .description {
    display: flex;
    height: 26px;
    border: 1px solid #d4d4dc;
    background: #fff;
  }
  .description p {
    flex: 1;
    padding-left: 1px;
  }
  .scroll {
    width: 6px;
    flex: none;
    display: flex;
    flex-direction: column;
    justify-content: space-between;
    align-items: center;
    background: #ececf0;
    color: #9a9aa0;
    font-size: 4px;
    line-height: 5px;
  }
  .scroll b {
    width: 6px;
    flex: 0 0 15px;
    margin-bottom: auto;
    background: #fff;
    border: 1px solid #e0e0e6;
  }
  .style-actions {
    display: flex;
    flex-direction: column;
    align-items: center;
    justify-content: space-around;
    width: 11px;
  }
  .style-tabs {
    display: flex;
    border-bottom: 1px solid #d4d8e0;
  }
  .style-tabs button {
    height: 12px;
    padding: 0 5px;
    background: #dcdce2;
    border: 1px solid #cfcfd8;
    border-bottom: 0;
    color: #6e6e76;
  }
  .style-tabs .current {
    background: #f6f9fd;
    color: #4a4a50;
  }
  .style-sets {
    display: flex;
    align-items: center;
    gap: 2px;
    height: 19px;
    border-bottom: 1px solid #dfe3ea;
  }
  .style-sets button, .face-styles button {
    width: 11px;
    height: 11px;
  }
  .style-sets span {
    margin-left: auto;
    padding-right: 2px;
  }
  .colors {
    height: 30px;
    padding: 0 2px;
    border-bottom: 1px solid #dfe3ea;
    color: #6a6a72;
  }
  .colors div {
    display: flex;
    align-items: center;
    height: 14px;
  }
  .colors span {
    width: 81px;
  }
  .swatch {
    width: 11px;
    height: 11px;
    border: 1px solid #cdd3da;
  }
  .face-styles {
    display: flex;
    gap: 9px;
    height: 33px;
    padding: 3px 2px 0;
    border-bottom: 1px solid #dfe3ea;
    color: #6a6a72;
  }
  .row {
    display: flex;
    gap: 1px;
    padding-top: 2px;
  }
  .rays .row {
    justify-content: center;
  }
  .check {
    display: flex;
    align-items: center;
    gap: 2px;
    height: 9px;
  }
  .check input {
    appearance: none;
    width: 7px;
    height: 7px;
    border: 1px solid #8b8b92;
    background: #fff;
  }
  .check input:checked::after {
    content: "";
    display: block;
    width: 2px;
    height: 3px;
    margin-left: 1px;
    border: solid #333;
    border-width: 0 1px 1px 0;
    transform: rotate(40deg);
  }
  .transparency {
    height: 60px;
    padding: 0 2px;
    border-bottom: 1px solid #dfe3ea;
  }
  .quality {
    display: flex;
    align-items: center;
    gap: 2px;
    height: 15px;
    padding: 1px 0 0 14px;
  }
  .quality select {
    width: 45px;
    height: 12px;
  }
  .muted {
    display: block;
    color: #a3a3ab;
    line-height: 10px;
  }
  .opacity {
    display: flex;
    gap: 2px;
    color: #8f8f97;
  }
  .scale {
    width: 87px;
  }
  .ticks {
    display: flex;
    justify-content: space-between;
    padding-top: 3px;
  }
  .amount {
    width: 13px;
    height: 12px;
    margin-top: 2px;
  }
  input[type="range"] {
    appearance: none;
    display: block;
    width: 102px;
    height: 9px;
    background: linear-gradient(#c6c6cb, #c6c6cb) no-repeat center / 100% 2px;
  }
  .scale input[type="range"] {
    width: 100%;
  }
  input[type="range"]::-webkit-slider-thumb {
    appearance: none;
    width: 6px;
    height: 6px;
    border: 1px solid #bcbcc3;
    border-radius: 2px;
    background: #fff;
  }
  .occlusion {
    height: 59px;
    padding: 4px 2px 0;
  }
  .occlusion .muted {
    padding-top: 2px;
    line-height: 10px;
  }

  .tag-tools {
    display: flex;
    align-items: center;
    gap: 9px;
    height: 15px;
    padding: 0 5px 1px;
  }
  .tag-tools input {
    flex: 1;
    height: 12px;
    margin: 0 -1px 0 -6px;
  }
  .tag-tools input::placeholder {
    color: #b5b5bb;
  }
  .tag-list {
    display: flex;
    margin: 0 1px 10px 2px;
    background: #fff;
  }
  table {
    flex: 1;
    table-layout: fixed;
    border-collapse: collapse;
    white-space: nowrap;
  }
  th, td {
    height: 8px;
    padding: 0;
    text-align: left;
    font-weight: normal;
  }
  th {
    height: 9px;
    border-right: 1px solid #e6e6ea;
  }
  th.eye {
    width: 23px;
  }
  th.name {
    width: 47px;
  }
  th.name svg {
    margin-left: 14px;
  }
  th.color {
    width: 17px;
  }
  td.eye .icon {
    margin-left: 7px;
  }
  td .icon {
    display: inline-block;
    vertical-align: middle;
  }
  td.eye {
    line-height: 7px;
  }
  .default {
    position: relative;
  }
  .edit {
    position: absolute;
    left: 35px;
    top: 0;
  }
  .tag-color {
    display: block;
    width: 8px;
    height: 8px;
    border-bottom: 1px solid #fff;
  }
  .dash {
    display: block;
    width: 28px;
    height: 1px;
    background: #333;
  }

  .scene-tools {
    display: flex;
    align-items: center;
    gap: 2px;
    height: 13px;
    padding: 0 5px 0 2px;
  }
  .scene-tools span {
    flex: 1;
  }
  .scene-list {
    display: flex;
    height: 45px;
    margin: 0 1px 0 2px;
    border-top: 1px solid #cdd0d8;
    background: #fff;
    overflow: hidden;
  }
  .scene-list ul {
    flex: 1;
    list-style: none;
  }
  li {
    display: flex;
    gap: 2px;
    padding: 3px 0 1px 1px;
  }
  .scene-thumb {
    width: 30px;
    border: 1px solid #c6c6cc;
    border-bottom: 0;
    display: flex;
    flex-direction: column;
    align-items: center;
    font-size: 6px;
    line-height: 8px;
  }
  .scene-thumb.expanded {
    height: 31px;
    border-bottom: 1px solid #c6c6cc;
  }
  .scene-info {
    line-height: 7px;
    color: #77777c;
  }
  .scene-info strong {
    color: #1c1c20;
  }
  .scene-info b {
    color: #333;
  }
  .tray-scroll {
    width: 6px;
    flex: none;
    display: flex;
    flex-direction: column;
    align-items: center;
    background: #ececf0;
    color: #8a8a90;
    font-size: 4px;
    line-height: 6px;
  }
  .tray-scroll b {
    width: 6px;
    height: 396px;
    margin-bottom: auto;
    background: #fff;
  }

  .statusbar {
    display: flex;
    align-items: center;
    gap: 5px;
    height: 16px;
    padding-left: 3px;
    color: #6a6a72;
  }
  .statusbar p {
    flex: 1;
    padding-left: 4px;
  }
  .statusbar input {
    width: 92px;
    height: 12px;
    background: #f4f4f8;
  }
</style>
